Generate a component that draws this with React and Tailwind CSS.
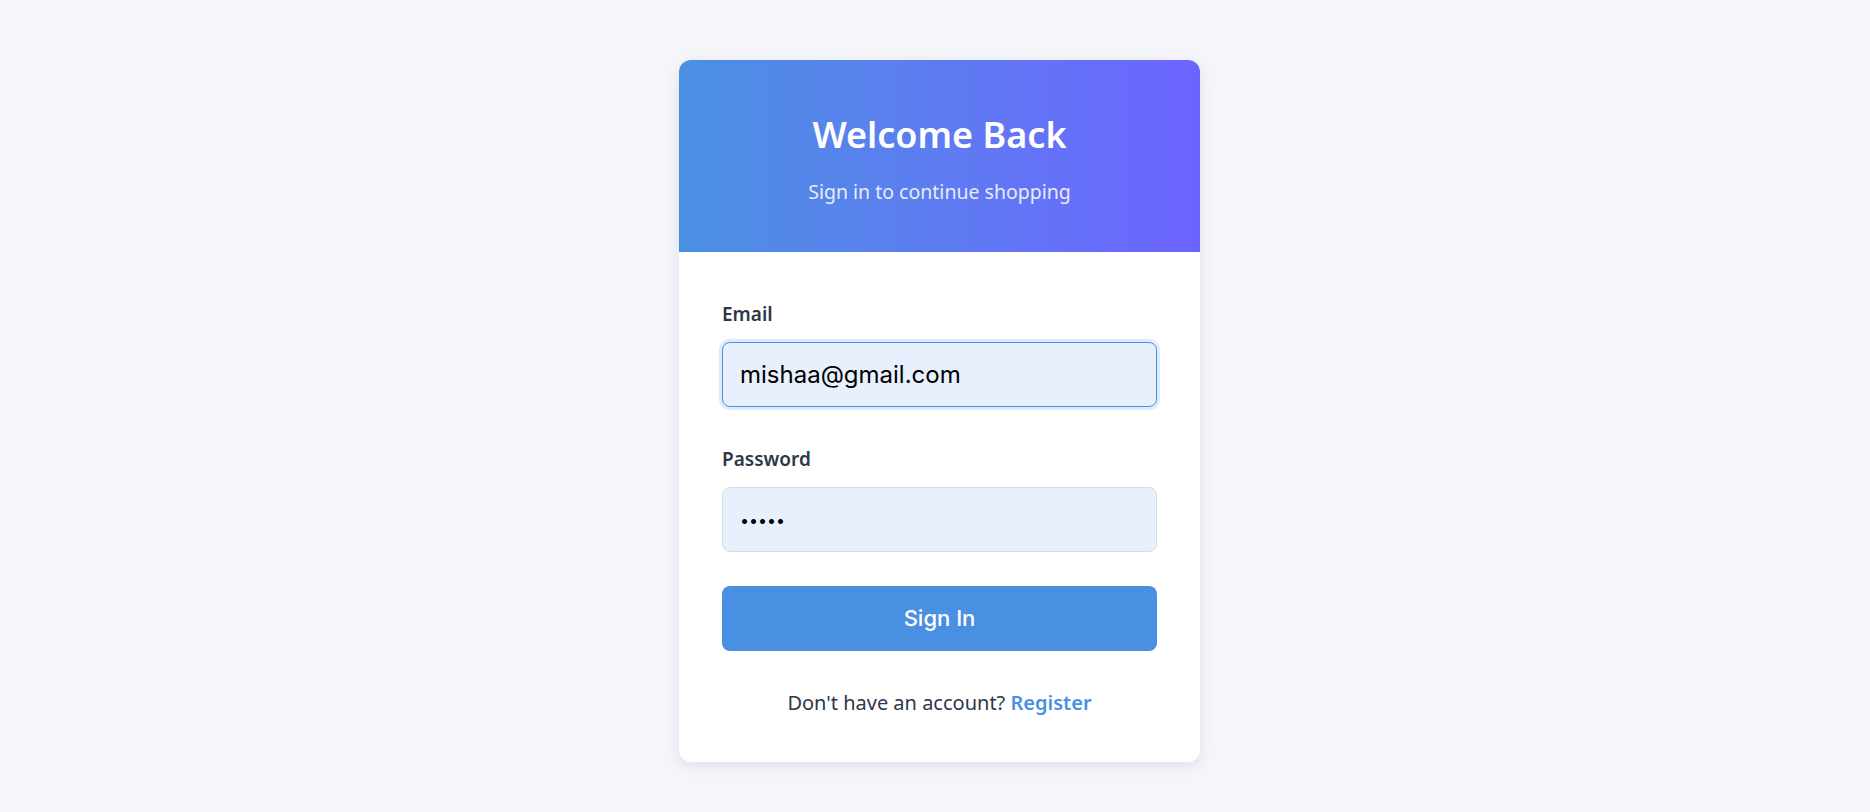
import { useState } from 'react';

function App() {
  const [email, setEmail] = useState('mishaa@gmail.com');
  const [password, setPassword] = useState('12345');

  return (
    <div className="min-h-screen w-full bg-[#f4f6fa] pl-[9px] pt-[60px] font-['Noto_Sans',sans-serif]">
      <div className="mx-auto w-[521px] overflow-hidden rounded-xl bg-white shadow-[0_4px_14px_rgba(30,40,80,0.10)]">
        <div className="h-[192px] bg-gradient-to-r from-[#4a90e2] to-[#6c63ff] pt-[53px] text-center">
          <h1 className="text-[36px] font-semibold leading-[44px] text-white">Welcome Back</h1>
          <p className="mt-[21px] text-[19.5px] leading-[28px] text-white/85">Sign in to continue shopping</p>
        </div>

        <form className="px-[43px] pt-[48px] pb-[45px]" onSubmit={(e) => e.preventDefault()}>
          <label className="block text-[19px] font-semibold leading-[28px] text-[#2d3748]">Email</label>
          <input
            type="email"
            value={email}
            onChange={(e) => setEmail(e.target.value)}
            className="mt-[14px] block h-[65px] w-full rounded-lg border border-[#4a90e2] bg-[#e8f0fe] px-[17px] font-['Inter',sans-serif] text-[24px] text-black shadow-[0_0_0_3px_rgba(74,144,226,0.18)] outline-none"
          />

          <label className="mt-[38px] block text-[19px] font-semibold leading-[28px] text-[#2d3748]">Password</label>
          <input
            type="password"
            value={password}
            onChange={(e) => setPassword(e.target.value)}
            className="mt-[14px] block h-[65px] w-full rounded-lg border border-[#d7dce4] bg-[#e8f0fe] px-[17px] font-['Inter',sans-serif] text-[16px] text-black outline-none"
          />

          <button
            type="submit"
            className="mt-[34px] block h-[65px] w-full rounded-lg bg-[#4a90e2] font-['Inter',sans-serif] text-[22px] font-medium text-white"
          >
            Sign In
          </button>

          <p className="mt-[38px] text-center text-[20px] leading-[28px] text-[#2d3748]">
            Don't have an account?{' '}
            <a href="#" className="font-semibold text-[#4a90e2]">Register</a>
          </p>
        </form>
      </div>
    </div>
  );
}

export default App;
